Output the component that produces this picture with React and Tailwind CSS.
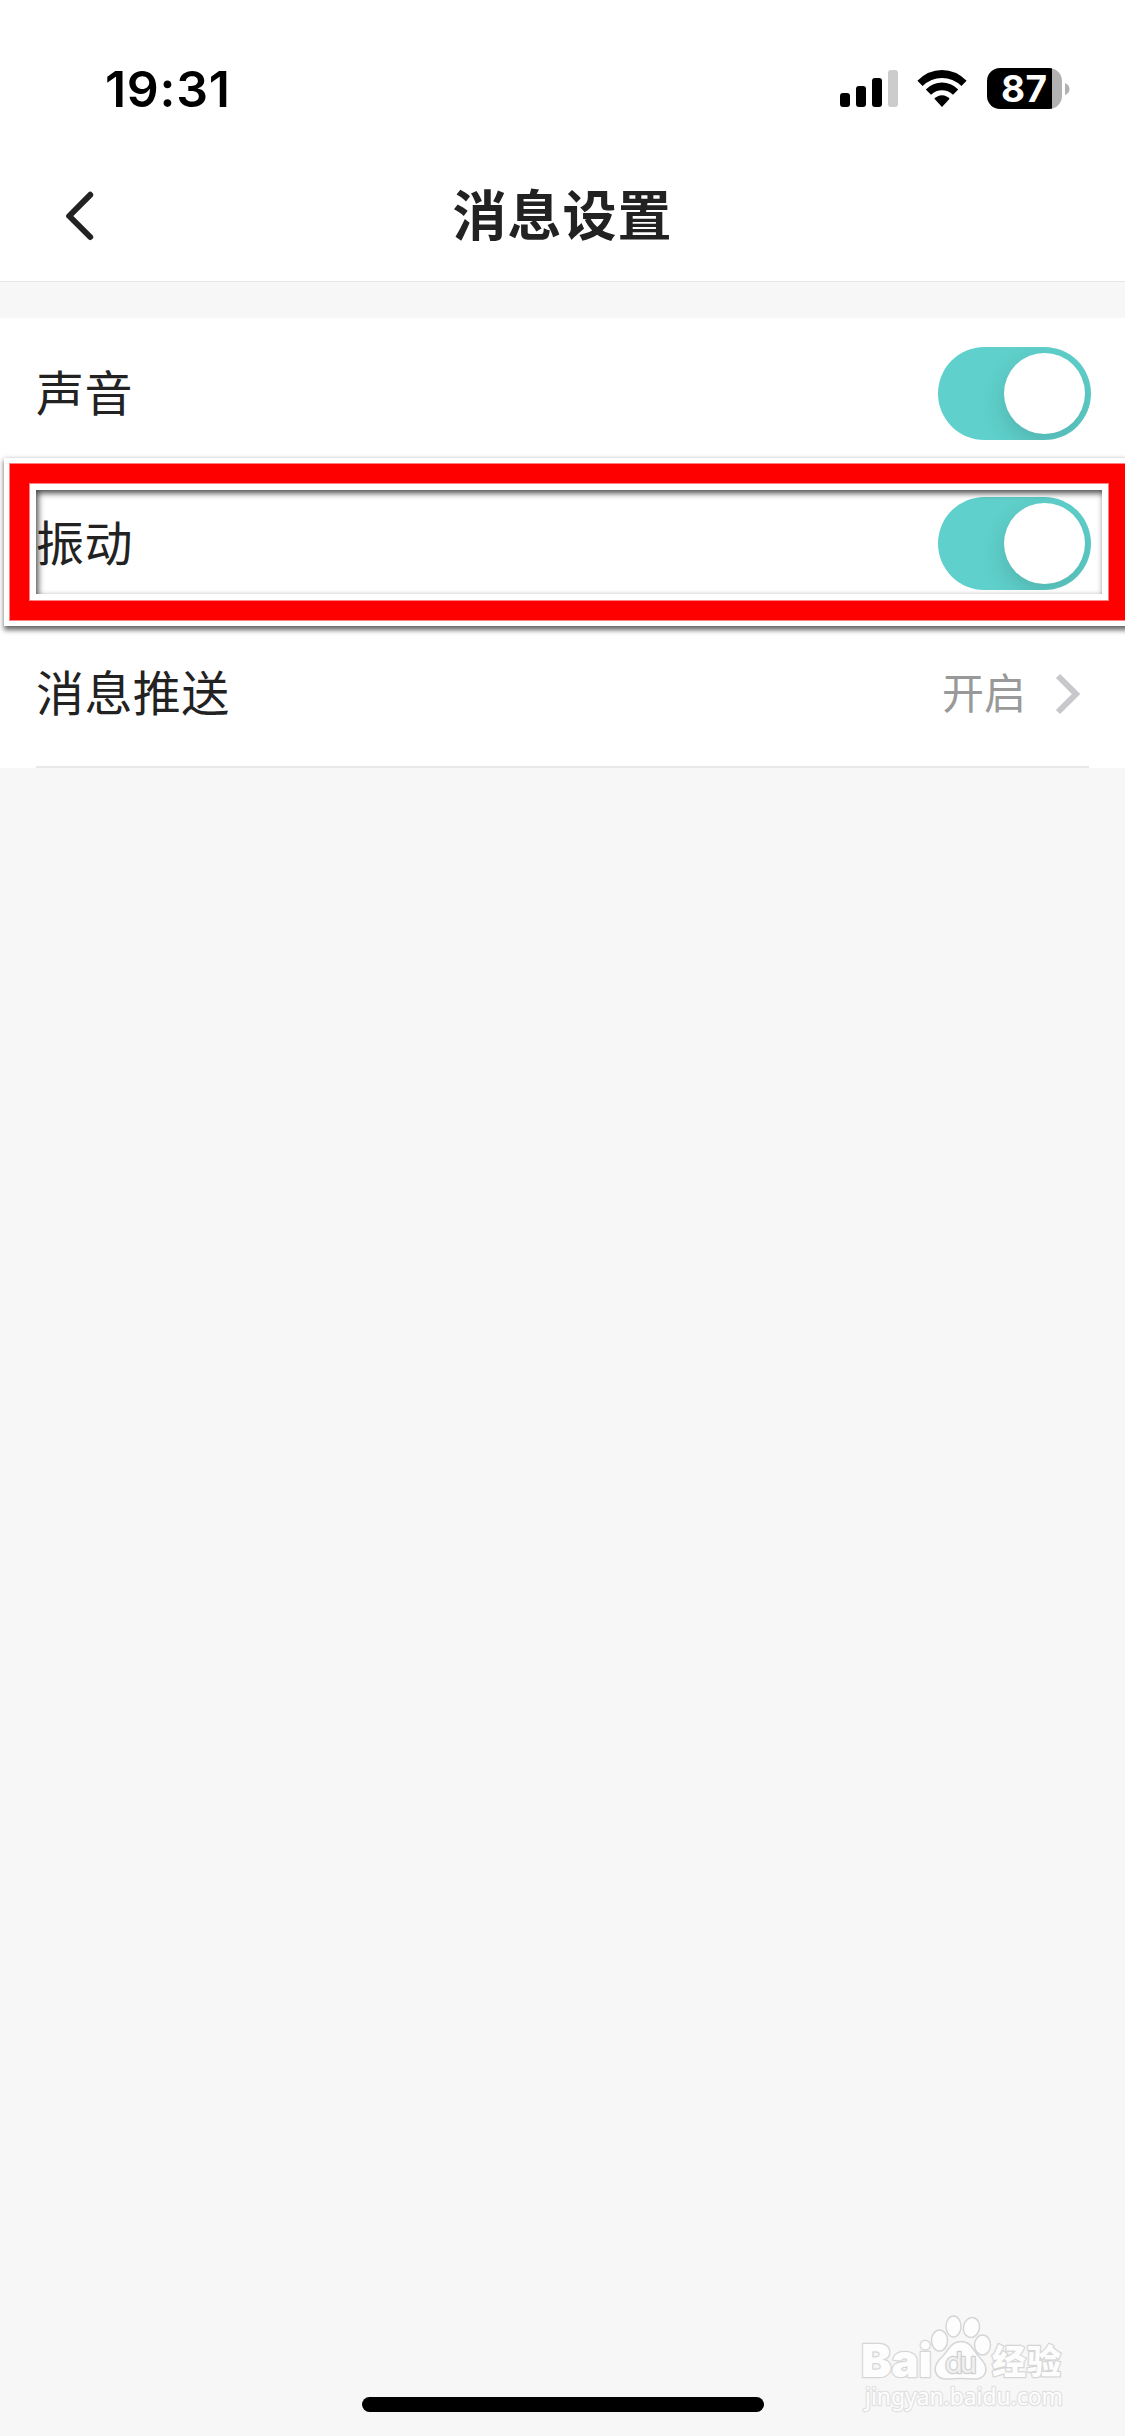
import { useState } from "react";

function StatusBar() {
  return (
    <div className="h-[150px] flex justify-between pl-[105px] pr-[55px] pt-[59px] text-black">
      <span className="font-['Inter'] text-[50px] leading-[60px] font-semibold tracking-[0.7px]">19:31</span>
      <div className="flex items-start pt-[9px]">
        <svg className="w-[58px] h-[38px] mt-0.5" viewBox="0 0 58 38">
          <rect x="0" y="23" width="10" height="14" rx="3" />
          <rect x="16" y="16" width="10" height="21" rx="3" />
          <rect x="32" y="8" width="10" height="29" rx="3" />
          <rect x="48" y="0" width="10" height="37" rx="3" fill="#cccccc" />
        </svg>
        <svg className="w-[50px] h-[38px] mt-0.5 ml-[19px]" viewBox="0 0 50 38">
          <path d="M0.4 10.8Q11 0 25 0Q39 0 49.6 10.8L44.4 16Q36 8 25 8Q14 8 5.600 16Z" />
          <path d="M8.800 19.400Q16 12.600 25 12.600Q34 12.600 41.200 19.400L36 24.700Q31 20.300 25 20.300Q19 20.300 14 24.700Z" />
          <path d="M17.400 28.800Q20.500 25.200 25 25.200Q29.500 25.200 32.600 28.800L25 37Z" />
        </svg>
        <div className="ml-[20px] w-[75px] h-[41px] rounded-[13px] bg-[linear-gradient(to_right,#000_65px,#b2b2b2_65px)] pl-[14px]">
          <span className="block text-white font-['Inter'] font-bold text-[37px] leading-[41px] tracking-[0.5px]">87</span>
        </div>
        <svg className="w-[5px] h-[12px] mt-[15px] ml-[3px]" viewBox="0 0 5 12">
          <path d="M0 0Q4.500 2 4.500 6Q4.500 10 0 12Z" fill="#b2b2b2" />
        </svg>
      </div>
    </div>
  );
}

function Header() {
  return (
    <header className="relative h-[132px] pb-[1px] border-b border-[#e5e5e5] flex justify-center">
      <svg className="absolute left-[64px] top-[40px] w-[32px] h-[52px]" viewBox="0 0 32 52" fill="none" stroke="#222222" strokeWidth="6" strokeLinecap="round" strokeLinejoin="round">
        <path d="M26.200 4.800L5.200 26L26.200 47" />
      </svg>
      <h1 className="text-[54px] leading-[132px] h-[130px] -mt-[3px] font-bold tracking-[1px]">消息设置</h1>
    </header>
  );
}

function Toggle({ on, onChange }) {
  return (
    <button
      className={`w-[153px] h-[93px] rounded-full p-[6px] flex overflow-hidden ${on ? "bg-[#5fd0cb] justify-end" : "bg-gray-200 justify-start"}`}
      onClick={() => onChange(!on)}
    >
      <span className="size-[81px] rounded-full bg-white shadow-[0_9px_24px_rgba(0,0,0,0.14)]" />
    </button>
  );
}

function Row({ label, children }) {
  return (
    <div className="h-[150px] flex items-center justify-between pl-[36px] pr-[34px] bg-white">
      <span className="text-[48px] leading-[72px] pb-[6px] tracking-[0.4px]">{label}</span>
      {children}
    </div>
  );
}

// red outline around the vibration row
function Highlight() {
  return (
    <div className="absolute left-[4px] top-[140px] w-[1130px] h-[168px] border-[5px] border-white shadow-[1px_3px_5px_1px_rgba(0,0,0,0.6)]">
      <div className="h-full border border-[#ff8080]">
        <div className="h-full border-[19px] border-[#ff0000]">
          <div className="h-full border border-[#ff8080]">
            <div className="h-full border-[6px] border-white">
              <div className="h-full shadow-[inset_2px_3px_6px_rgba(0,0,0,0.75)]" />
            </div>
          </div>
        </div>
      </div>
    </div>
  );
}

function Watermark() {
  return (
    <svg className="absolute left-[855px] top-[2308px] w-[220px] h-[110px]" viewBox="0 0 220 110" fill="#fdfdfd" stroke="#d6d6d6" strokeWidth="1.500">
      <ellipse cx="84.500" cy="32.500" rx="8" ry="10.500" />
      <ellipse cx="98.500" cy="18.500" rx="7.500" ry="10.500" />
      <ellipse cx="116.500" cy="19.500" rx="8" ry="10" transform="rotate(12 116.500 19.500)" />
      <ellipse cx="127.500" cy="37" rx="8" ry="10" />
      <path d="M106 33.500C96 33.500 94 42 87 49C81 54 78 61 82 67C86 73 95 70.500 106 70.500C117 70.500 123 73 128.500 68C133 62 131 56 125 50C118 43 117 33.500 106 33.500Z" />
      <g paintOrder="stroke" strokeLinejoin="round" strokeWidth="2.500">
        <text x="6" y="69" fontSize="46" fontWeight="900" fontFamily="Inter" textLength="71" lengthAdjust="spacingAndGlyphs">Bai</text>
        <text x="90" y="65" fontSize="29" fontWeight="400" fontFamily="Inter" stroke="#cfcfcf" fill="#f0f0f0" textLength="32">du</text>
        <text x="137" y="66" fontSize="34" fontWeight="900" fontFamily="Noto Sans CJK SC" textLength="69">经验</text>
        <text x="10" y="97" fontSize="23" fontFamily="Noto Sans" stroke="#e2e2e2" textLength="198" lengthAdjust="spacingAndGlyphs">jingyan.baidu.com</text>
      </g>
    </svg>
  );
}

function App() {
  const [sound, setSound] = useState(true);
  const [vibrate, setVibrate] = useState(true);

  return (
    <div className="relative w-[1125px] h-[2436px] overflow-hidden flex flex-col bg-[#f7f7f7] text-[#222222] font-['Noto_Sans_CJK_SC',sans-serif]">
      <div className="bg-white">
        <StatusBar />
        <Header />
      </div>
      <main className="relative mt-[36px]">
        <Row label="声音">
          <Toggle on={sound} onChange={setSound} />
        </Row>
        <Row label="振动">
          <Toggle on={vibrate} onChange={setVibrate} />
        </Row>
        <Row label="消息推送">
          <div className="flex items-center pr-[10px]">
            <span className="text-[42px] leading-[60px] pb-[4px] text-[#999999]">开启</span>
            <svg className="w-[26px] h-[42px] ml-[29px] mt-[1px]" viewBox="0 0 26 42" fill="none" stroke="#c7c7cc" strokeWidth="6">
              <path d="M3 3L21 21L3 39" />
            </svg>
          </div>
        </Row>
        <div className="h-[2px] -mt-[2px] ml-[36px] mr-[36px] bg-[#e8e8e8]" />
        <Highlight />
      </main>
      <div className="mt-auto mb-[24px] mx-auto w-[402px] h-[15px] rounded-full bg-black" />
      <Watermark />
    </div>
  );
}

export default App;
